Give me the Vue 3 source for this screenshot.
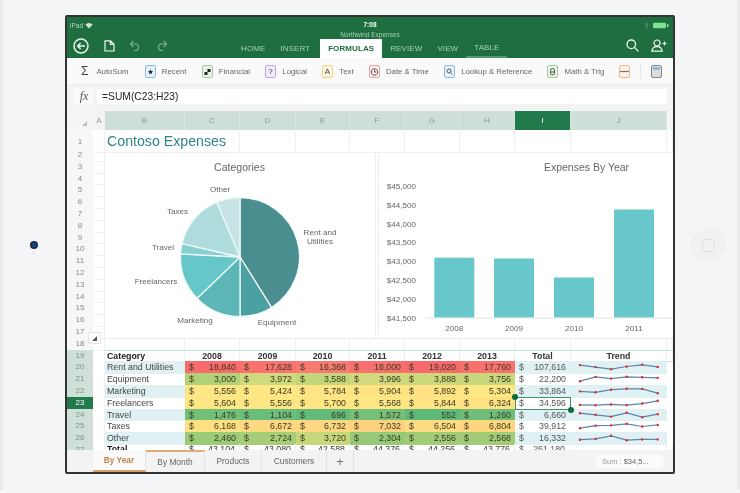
<script setup>
import { computed } from 'vue';

const columns = ['B', 'C', 'D', 'E', 'F', 'G', 'H', 'I', 'J'];

const ribbonItems = [
  { label: 'Recent', color: '#8dbbe8', fill: '#e4f0fb', path: 'M5.5 3.5l.8 1.5 1.7.2-1.2 1.2.3 1.7-1.6-.8-1.6.8.3-1.7L3 5.2l1.7-.2z', solid: true },
  { label: 'Financial', color: '#a3cf9f', fill: '#e7f3e5', path: 'M2.5 6h3v3h-3zM5.5 3h3v3h-3z', solid: true },
  { label: 'Logical', color: '#bba6e3', fill: '#f1ecfa', text: '?' },
  { label: 'Text', color: '#f1d587', fill: '#fdf6df', text: 'A' },
  { label: 'Date & Time', color: '#eba3a3', fill: '#fbe9e9', path: 'M5.5 2.8a3.2 3.2 0 1 0 .01 0M5.5 4.2V6h1.6' },
  { label: 'Lookup & Reference', color: '#8dbbe8', fill: '#e4f0fb', path: 'M5 3a2 2 0 1 0 .01 0M6.5 6.5l2 2' },
  { label: 'Math & Trig', color: '#a3cf9f', fill: '#e7f3e5', path: 'M3.5 4.5a2 2 0 0 1 4 0v3.2a1 1 0 0 1-1 1h-2a1 1 0 0 1-1-1zM3.5 6h4' },
];

const rows = [
  { name: 'Rent and Utilities', values: [18840, 17628, 16368, 18000, 19020, 17760] },
  { name: 'Equipment', values: [3000, 3972, 3588, 3996, 3888, 3756] },
  { name: 'Marketing', values: [5556, 5424, 5784, 5904, 5892, 5304] },
  { name: 'Freelancers', values: [5604, 5556, 5700, 5568, 5844, 6324] },
  { name: 'Travel', values: [1476, 1104, 696, 1572, 552, 1260] },
  { name: 'Taxes', values: [6168, 6672, 6732, 7032, 6504, 6804] },
  { name: 'Other', values: [2460, 2724, 3720, 2304, 2556, 2568] },
];

const years = [2008, 2009, 2010, 2011, 2012, 2013];

// colour scale stops picked off the reference
const stops = [
  [552, [95, 185, 123]],
  [1476, [114, 191, 122]],
  [2460, [156, 203, 120]],
  [3000, [176, 209, 119]],
  [3972, [207, 217, 125]],
  [5300, [255, 232, 132]],
  [6300, [255, 224, 131]],
  [7032, [253, 210, 127]],
  [16368, [249, 122, 112]],
  [19020, [248, 105, 107]],
];

function scale(v) {
  for (let i = 1; i < stops.length; i++) {
    if (v <= stops[i][0]) {
      const [a, ca] = stops[i - 1];
      const [b, cb] = stops[i];
      const t = Math.max(0, (v - a) / (b - a));
      const c = ca.map((x, k) => Math.round(x + (cb[k] - x) * t));
      return `rgb(${c.join(',')})`;
    }
  }
  return 'rgb(248,105,107)';
}

const fmt = (n) => n.toLocaleString('en-US');

function trend(values) {
  const min = Math.min(...values);
  const max = Math.max(...values);
  return values.map((v, i) => ({
    x: 9 + i * 15.55,
    y: 8.2 - ((v - min) / (max - min)) * 4.4,
  }));
}

const tableRows = computed(() =>
  rows.map((r, i) => ({
    ...r,
    number: 20 + i,
    total: r.values.reduce((a, b) => a + b, 0),
    points: trend(r.values),
    line: trend(r.values).map((p) => `${p.x},${p.y}`).join(' '),
  }))
);

const yearTotals = computed(() =>
  years.map((_, i) => rows.reduce((sum, r) => sum + r.values[i], 0))
);
const grandTotal = computed(() => yearTotals.value.reduce((a, b) => a + b, 0));

const emptyRows = Array.from({ length: 17 }, (_, i) => i + 2);

// pie angles in degrees clockwise from the top
const slices = [
  { to: 148, color: '#4a8e90' },
  { to: 180, color: '#4ba0a2' },
  { to: 226, color: '#5cb5b7' },
  { to: 273, color: '#66c7ca' },
  { to: 283, color: '#8ad0d2' },
  { to: 337, color: '#aedcdd' },
  { to: 360, color: '#c6e4e6' },
];

const pie = computed(() => {
  const cx = 135;
  const cy = 104;
  const r = 59.5;
  const pt = (a) => {
    const rad = (a * Math.PI) / 180;
    return `${(cx + r * Math.sin(rad)).toFixed(2)} ${(cy - r * Math.cos(rad)).toFixed(2)}`;
  };
  let from = 0;
  return slices.map((s) => {
    const large = s.to - from > 180 ? 1 : 0;
    const d = `M${cx} ${cy}L${pt(from)}A${r} ${r} 0 ${large} 1 ${pt(s.to)}Z`;
    from = s.to;
    return { d, color: s.color };
  });
});

const pieLabels = [
  { text: 'Other', x: 115, y: 39 },
  { text: 'Taxes', x: 72.5, y: 61 },
  { text: 'Rent and', x: 215, y: 82 },
  { text: 'Utilities', x: 215, y: 91 },
  { text: 'Travel', x: 58, y: 97 },
  { text: 'Freelancers', x: 51, y: 131 },
  { text: 'Marketing', x: 90, y: 170 },
  { text: 'Equipment', x: 172, y: 172 },
];

const axisLabels = ['$45,000', '$44,500', '$44,000', '$43,500', '$43,000', '$42,500', '$42,000', '$41,500'];

const bars = [
  { year: 2008, x: 55.3, top: 104.7 },
  { year: 2009, x: 115, top: 105.5 },
  { year: 2010, x: 175, top: 124.5 },
  { year: 2011, x: 235, top: 56.5 },
];

const tabs = ['By Year', 'By Month', 'Products', 'Customers'];
</script>

<template>
  <div class="page">
    <div class="bezel bezel-left"><span class="camera"></span></div>

    <div class="tablet">
      <header class="titlebar">
        <div class="status">
          <span class="carrier">iPad
            <svg width="8" height="7" viewBox="0 0 8 7"><path d="M4 6.5L.3 2.6a5.2 5.2 0 0 1 7.4 0z" fill="#cfe3d7" /></svg>
          </span>
          <div class="doc-title">
            <strong>7:08</strong>
            <span>Northwind Expenses</span>
          </div>
          <span class="battery">
            <svg width="26" height="7" viewBox="0 0 26 7">
              <path d="M2 .5l2 1.5-2 1.5 2 1.5-2 1.5V.5z" fill="none" stroke="#5c9b77" stroke-width=".7" />
              <rect x="9" y=".7" width="13" height="5.6" rx="1" fill="#7fe08f" />
              <rect x="23" y="2.3" width="1.4" height="2.4" fill="#cfe3d7" />
            </svg>
          </span>
        </div>

        <div class="nav">
          <div class="nav-tools">
            <svg width="16" height="16" viewBox="0 0 16 16" fill="none" stroke="#eaf3ee" stroke-width="1.5">
              <circle cx="8" cy="8" r="7" />
              <path d="M12 8H4.8M7.6 5L4.6 8l3 3" />
            </svg>
            <svg width="11" height="12" viewBox="0 0 11 12" fill="none" stroke="#eef5f1" stroke-width="1.2">
              <path d="M1 .8h5.6L10 4.2V11H1zM6.4.8v3.6H10" />
            </svg>
            <svg width="12" height="11" viewBox="0 0 12 11" fill="none" stroke="#7fb097" stroke-width="1.1">
              <path d="M4.4 1L1.4 4l3 3M1.6 4H7a3.4 3.4 0 0 1 0 6.6H5" />
            </svg>
            <svg width="12" height="11" viewBox="0 0 12 11" fill="none" stroke="#7fb097" stroke-width="1.1">
              <path d="M7.6 1l3 3-3 3M10.4 4H5a3.4 3.4 0 0 0 0 6.6h2" />
            </svg>
          </div>

          <nav class="menu">
            <a>HOME</a>
            <a>INSERT</a>
            <a class="active">FORMULAS</a>
            <a>REVIEW</a>
            <a>VIEW</a>
            <a class="table-tab">TABLE</a>
          </nav>

          <div class="nav-right">
            <svg width="13" height="13" viewBox="0 0 13 13" fill="none" stroke="#f1f7f3" stroke-width="1.3">
              <circle cx="5.3" cy="5.3" r="4.3" />
              <path d="M8.4 8.4L12.4 12.4" />
            </svg>
            <svg width="16" height="13" viewBox="0 0 16 13" fill="none" stroke="#f1f7f3" stroke-width="1.2">
              <circle cx="6" cy="4" r="3" />
              <path d="M.8 12.2c.4-3.4 2.4-4.6 5.2-4.6s4.8 1.2 5.2 4.6zM11.5 4.5h4M13.5 2.5v4" />
            </svg>
          </div>
        </div>
      </header>

      <div class="ribbon">
        <div class="ribbon-item autosum">
          <span class="sigma">Σ</span>
          <span>AutoSum</span>
        </div>
        <div v-for="item in ribbonItems" :key="item.label" class="ribbon-item">
          <span class="fn-icon" :style="{ borderColor: item.color, background: item.fill }">
            <template v-if="item.text">{{ item.text }}</template>
            <svg v-else width="11" height="11" viewBox="0 0 11 11">
              <path
                :d="item.path"
                :fill="item.solid ? '#222' : 'none'"
                :stroke="item.solid ? 'none' : '#555'"
                stroke-width="1"
              />
            </svg>
          </span>
          <span>{{ item.label }}</span>
        </div>
        <span class="fn-icon more">
          <svg width="9" height="11" viewBox="0 0 9 11"><path d="M0 5.5h9" stroke="#777" stroke-width="1.2" /></svg>
        </span>
        <span class="ribbon-divider"></span>
        <span class="calc"><i></i></span>
      </div>

      <div class="formula-bar">
        <span class="fx">fx</span>
        <div class="formula">=SUM(C23:H23)</div>
      </div>

      <div class="col-head">
        <div class="corner"><i></i></div>
        <div class="col-a">A</div>
        <div v-for="c in columns" :key="c" class="col" :class="{ picked: c === 'I' }">{{ c }}</div>
      </div>

      <div class="sheet">
        <div class="row title-row">
          <div class="num">1</div>
          <div class="cell"></div>
          <div class="cell title-cell">Contoso Expenses</div>
          <div v-for="c in 8" :key="c" class="cell"></div>
          <div class="cell"></div>
        </div>

        <div v-for="n in emptyRows" :key="n" class="row">
          <div class="num">{{ n }}</div>
          <div v-for="c in 11" :key="c" class="cell"></div>
        </div>

        <div class="row head-row">
          <div class="num tinted">19</div>
          <div class="cell"></div>
          <div class="cell bold-name">Category</div>
          <div v-for="y in years" :key="y" class="cell year">{{ y }}</div>
          <div class="cell year">Total</div>
          <div class="cell year">Trend</div>
          <div class="cell"></div>
        </div>

        <div v-for="(r, i) in tableRows" :key="r.name" class="row data-row" :class="{ band: i % 2 === 0 }">
          <div class="num tinted" :class="{ picked: r.number === 23 }">{{ r.number }}</div>
          <div class="cell"></div>
          <div class="cell name">{{ r.name }}</div>
          <div v-for="(v, k) in r.values" :key="k" class="cell money" :style="{ background: scale(v) }">
            <span>$</span><span>{{ fmt(v) }}</span>
          </div>
          <div class="cell money total"><span>$</span><span>{{ fmt(r.total) }}</span></div>
          <div class="cell spark">
            <svg width="96" height="11" viewBox="0 0 96 11">
              <polyline :points="r.line" fill="none" stroke="#5c86ad" stroke-width="1.2" />
              <circle v-for="(p, j) in r.points" :key="j" :cx="p.x" :cy="p.y" r="1.2" fill="#e8262c" />
            </svg>
          </div>
          <div class="cell"></div>
        </div>

        <div class="row total-row">
          <div class="num tinted">27</div>
          <div class="cell"></div>
          <div class="cell bold-name">Total</div>
          <div v-for="(v, k) in yearTotals" :key="k" class="cell money"><span>$</span><span>{{ fmt(v) }}</span></div>
          <div class="cell money total"><span>$</span><span>{{ fmt(grandTotal) }}</span></div>
          <div class="cell"></div>
          <div class="cell"></div>
        </div>

        <!-- charts float over the grid -->
        <section class="chart chart-pie">
          <svg width="270" height="185" viewBox="0 0 270 185">
            <text class="chart-title" x="134.5" y="17.5">Categories</text>
            <path v-for="(s, i) in pie" :key="i" :d="s.d" :fill="s.color" stroke="#eef8f8" stroke-width="1.3" />
            <text v-for="l in pieLabels" :key="l.text" class="chart-label" :x="l.x" :y="l.y">{{ l.text }}</text>
          </svg>
        </section>

        <section class="chart chart-bar">
          <svg width="296" height="185" viewBox="0 0 296 185">
            <text class="chart-title" x="207.5" y="17.5">Expenses By Year</text>
            <text
              v-for="(a, i) in axisLabels"
              :key="a"
              class="chart-label axis"
              x="37"
              :y="35.7 + i * 18.9"
            >{{ a }}</text>
            <rect v-for="b in bars" :key="b.year" :x="b.x" :y="b.top" width="40" :height="164.7 - b.top" fill="#68c7ca" />
            <path d="M46 165h250" stroke="#e2e2e2" />
            <text v-for="b in bars" :key="b.year" class="chart-label" :x="b.x + 20" y="178">{{ b.year }}</text>
          </svg>
        </section>

        <button class="resize" type="button"><i></i></button>

        <div class="selection">
          <span class="handle handle-top"></span>
          <span class="handle handle-bottom"></span>
        </div>
      </div>

      <footer class="tabs">
        <a v-for="(t, i) in tabs" :key="t" class="tab" :class="['tab-' + i, { current: i === 0, next: i === 1 }]">{{ t }}</a>
        <a class="tab tab-add">+</a>
        <span class="sum">Sum : <b>$34,5...</b></span>
      </footer>
    </div>

    <div class="bezel bezel-right"><span class="home"><i></i></span></div>
  </div>
</template>

<style scoped>
.page {
  display: flex;
  width: 740px;
  height: 493px;
  overflow: hidden;
  background: #f4f5f7;
  font-family: 'Liberation Sans', Arial, sans-serif;
  color: #333;
}

.bezel {
  width: 65px;
  flex: none;
  box-sizing: border-box;
  display: flex;
  align-items: center;
  justify-content: center;
  height: 490px;
}

.bezel-left {
  border-left: 3px solid #e9eaeb;
}

.bezel-right {
  border-right: 3px solid #e9eaeb;
  padding-left: 4px;
}

.camera {
  position: relative;
  width: 8px;
  height: 8px;
  border-radius: 50%;
  background: radial-gradient(circle, #14418c 0 30%, #222 70%);
}

.camera::after {
  content: '';
  position: absolute;
  left: 2px;
  top: 10px;
  width: 4px;
  height: 4px;
  border-radius: 50%;
  background: #e9eaec;
}

.home {
  display: flex;
  align-items: center;
  justify-content: center;
  width: 33px;
  height: 33px;
  border-radius: 50%;
  background: #f0f1f3;
  box-shadow: 0 0 2px #e9eaec;
}

.home i {
  width: 11px;
  height: 11px;
  border: 1.5px solid #dfe0e3;
  border-radius: 3px;
}

.tablet {
  display: flex;
  flex-direction: column;
  width: 610px;
  height: 459px;
  margin-top: 15px;
  flex: none;
  box-sizing: border-box;
  border: 2px solid #333;
  border-radius: 2px;
  background: #fff;
  overflow: hidden;
  filter: blur(0.45px);
}

.titlebar {
  height: 41px;
  flex: none;
  background: #1e6e3f;
  color: #fff;
  display: flex;
  flex-direction: column;
}

.status {
  display: grid;
  grid-template-columns: 1fr auto 1fr;
  height: 22px;
  padding: 3px 3px 0 3px;
  font-size: 6.5px;
  box-sizing: border-box;
}

.carrier {
  display: flex;
  gap: 2px;
  color: #b8d5c4;
  align-items: flex-start;
  padding-top: 2px;
}

.doc-title {
  display: flex;
  flex-direction: column;
  align-items: center;
  color: #a9cfb9;
  line-height: 9.5px;
}

.doc-title strong {
  color: #fff;
}

.battery {
  justify-self: end;
  padding-top: 2px;
}

.nav {
  display: flex;
  height: 19px;
  flex: none;
}

.nav-tools,
.nav-right {
  display: flex;
  align-items: center;
  height: 19px;
  margin-top: -3px;
}

.nav-tools {
  width: 80px;
  margin-left: 6px;
  gap: 14.5px;
}

.nav-tools svg,
.nav-right svg {
  flex: none;
}

.menu {
  display: flex;
  margin-left: 88px;
  height: 19px;
  align-items: stretch;
  font-size: 8px;
}

.menu a {
  display: flex;
  align-items: center;
  color: #a6d0b6;
  letter-spacing: 0.1px;
}

.menu a:nth-child(1) {
  margin-right: 15px;
}

.menu a:nth-child(2) {
  margin-right: 10px;
}

.menu .active {
  width: 62px;
  justify-content: center;
  background: #fff;
  color: #1e6e3f;
  font-weight: bold;
  margin-right: 8px;
}

.menu a:nth-child(4) {
  margin-right: 15px;
}

.menu a:nth-child(5) {
  margin-right: 8px;
}

.menu .table-tab {
  padding: 0 8px;
  border-bottom: 2px solid #4f9a6f;
  box-sizing: border-box;
}

.nav-right {
  margin-left: auto;
  margin-right: 6px;
  gap: 12px;
}

.ribbon {
  height: 27px;
  flex: none;
  box-sizing: border-box;
  display: flex;
  align-items: center;
  padding: 0 0 0 14px;
  background: #fafafa;
  border-bottom: 1px solid #ececec;
  font-size: 7.8px;
  color: #666;
}

.ribbon-item {
  display: flex;
  align-items: center;
  gap: 6.3px;
  margin-right: 15px;
  white-space: nowrap;
}

.autosum {
  gap: 8px;
  margin-right: 16px;
}

.sigma {
  font-size: 12px;
  color: #444;
}

.fn-icon {
  display: flex;
  align-items: center;
  justify-content: center;
  width: 11px;
  height: 13px;
  box-sizing: border-box;
  border: 1.3px solid #ccc;
  border-radius: 2px;
  font-size: 8px;
  color: #444;
  flex: none;
}

.fn-icon svg {
  flex: none;
}

.fn-icon.more {
  border-color: #f3b889;
  background: #fdf1e6;
}

.ribbon-divider {
  width: 1px;
  height: 14px;
  margin: 0 10px;
  background: #e6e6e6;
}

.calc {
  display: block;
  width: 11px;
  height: 13px;
  border: 1px solid #888;
  border-radius: 2px;
  background: #dcdcdc;
  box-sizing: border-box;
}

.calc i {
  display: block;
  height: 3px;
  background: #8dbbe8;
  margin: 1px;
}

.formula-bar {
  height: 26px;
  flex: none;
  box-sizing: border-box;
  display: flex;
  align-items: center;
  gap: 4px;
  padding: 0 6px 3px 6px;
  background: #f3f3f3;
}

.fx {
  width: 20px;
  height: 15px;
  line-height: 15px;
  text-align: center;
  text-indent: 2px;
  background: #fafafa;
  font-family: 'Liberation Serif', serif;
  font-style: italic;
  font-size: 12px;
  color: #555;
}

.formula {
  flex: 1;
  height: 15px;
  line-height: 15px;
  padding-left: 5px;
  background: #fff;
  font-size: 10.3px;
  color: #222;
}

.col-head,
.row {
  display: grid;
  grid-template-columns: 26px 12px 80px 55px 56px 54px 55px 55px 55px 56px 96px 6px;
}

.col-head {
  height: 19px;
  flex: none;
  background: #f5f5f5;
  font-size: 8px;
  color: #8a9a92;
  line-height: 19px;
  text-align: center;
}

.corner {
  display: flex;
  align-items: flex-end;
  justify-content: flex-end;
  padding: 0 6px 4px 0;
}

.corner i {
  width: 0;
  height: 0;
  border-left: 5px solid transparent;
  border-bottom: 5px solid #bbb;
}

.col-a {
  background: #f3f3f3;
}

.col {
  background: #cddfd6;
  border-right: 1px solid #dbe7e1;
}

.col.picked {
  background: #217a4b;
  color: #fff;
}

.sheet {
  position: relative;
  height: 320px;
  flex: none;
  overflow: hidden;
  font-size: 8.8px;
}

.row {
  height: 11.8px;
  line-height: 11.8px;
}

.title-row {
  height: 19px;
  line-height: 19px;
}

.num {
  background: #f7f7f7;
  text-align: center;
  font-size: 8px;
  color: #888;
  border-bottom: 1px solid #efefef;
  box-sizing: border-box;
}

.title-row .num {
  padding-top: 5px;
  line-height: 14px;
}

.num.tinted {
  background: #cfe0d8;
  color: #7f8f87;
  border-bottom-color: #dbe7e1;
}

.data-row .num {
  padding-top: 1px;
  line-height: 10.8px;
}

.num.picked {
  background: #217a4b;
  color: #fff;
}

.cell {
  box-sizing: border-box;
  border-right: 1px solid #f0f0f0;
  border-bottom: 1px solid #f0f0f0;
  white-space: nowrap;
  min-width: 0;
}

.title-cell {
  font-size: 14.2px;
  line-height: 22px;
  color: #2f8585;
  padding-left: 2px;
  border-right: 0;
}

.head-row .cell {
  border-top: 1px solid #bfe3e4;
  border-bottom: 1px solid #bfe3e4;
  border-right: 1px solid #f0f0f0;
  line-height: 10px;
}

.head-row .cell:nth-child(2) {
  border-top: 0;
  border-bottom: 0;
}

.bold-name {
  font-weight: bold;
  padding-left: 2px;
  color: #222;
}

.year {
  font-weight: bold;
  text-align: center;
  color: #333;
}

.name {
  padding-left: 2px;
  color: #444;
}

.data-row .cell {
  border-right: 0;
  border-bottom: 0;
  padding-top: 1px;
  line-height: 10.8px;
}

.data-row .spark {
  padding-top: 0;
}

.data-row .cell:nth-child(2) {
  border-right: 1px solid #f0f0f0;
}

.data-row.band .name,
.data-row.band .total,
.data-row.band .spark {
  background: #dff1f2;
}

.money {
  display: flex;
  justify-content: space-between;
  padding: 0 4px;
  color: #3a3a22;
}

.total {
  color: #555;
  padding-right: 5px;
}

.spark svg {
  display: block;
}

.chart {
  position: absolute;
  top: 23px;
  height: 185px;
  background: #fff;
  box-shadow: 0 0 0 1px #eeeeee;
}

.chart-pie {
  left: 38px;
  width: 270px;
}

.chart-bar {
  left: 312px;
  width: 296px;
}

.chart svg {
  display: block;
}

.chart-title {
  font-size: 10.5px;
  fill: #666;
  text-anchor: middle;
}

.chart-label {
  font-size: 8.1px;
  fill: #666;
  text-anchor: middle;
}

.chart-label.axis {
  text-anchor: end;
}

.resize {
  position: absolute;
  left: 21px;
  top: 202px;
  width: 13px;
  height: 12px;
  padding: 0;
  display: flex;
  align-items: center;
  justify-content: center;
  background: #fff;
  border: 1px solid #e4e4e4;
  border-radius: 1px;
}

.resize i {
  width: 0;
  height: 0;
  border-left: 5px solid transparent;
  border-bottom: 5px solid #555;
}

.selection {
  position: absolute;
  left: 448px;
  top: 267px;
  width: 56px;
  height: 13px;
  box-sizing: border-box;
  border: 1.5px solid #3c9468;
}

.handle {
  position: absolute;
  width: 6px;
  height: 6px;
  border-radius: 50%;
  background: #0e6b3e;
}

.handle-top {
  left: -4px;
  top: -4px;
}

.handle-bottom {
  right: -4px;
  bottom: -4px;
}

.tabs {
  display: flex;
  flex: 1;
  padding-left: 26px;
  background: #f3f3f3;
  font-size: 8.4px;
  color: #666;
  align-items: stretch;
}

.tab {
  display: flex;
  align-items: center;
  justify-content: center;
  box-sizing: border-box;
  border-right: 1px solid #e3e3e3;
}

.tab-0 {
  width: 53px;
}

.tab-1 {
  width: 59px;
}

.tab-2 {
  width: 57px;
}

.tab-3 {
  width: 65px;
}

.tab-add {
  width: 27px;
  font-size: 13px;
  color: #777;
}

.tab.current {
  background: #fafafa;
  color: #c8824a;
  font-weight: bold;
  border-bottom: 2px solid #dd9d66;
}

.tab.next {
  border-top: 2px solid #e5aa77;
}

.sum {
  margin-left: auto;
  margin-right: 9px;
  align-self: center;
  width: 69px;
  height: 13px;
  line-height: 13px;
  box-sizing: border-box;
  padding-left: 7px;
  border-radius: 7px;
  background: #fbfbfb;
  color: #999;
  font-size: 7.5px;
}

.sum b {
  color: #666;
  font-weight: normal;
}
</style>

<style>
body {
  margin: 0;
}
</style>
